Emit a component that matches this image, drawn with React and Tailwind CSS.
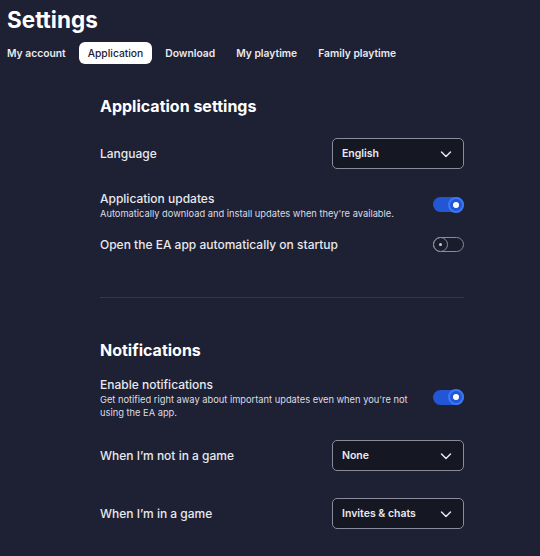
import React from "react";

function Chevron() {
  return (
    <svg width="14" height="14" viewBox="0 0 14 14" fill="none">
      <path d="M2.5 5 L7 9.5 L11.5 5" stroke="#e5e7eb" strokeWidth="1.5" strokeLinecap="round" strokeLinejoin="round" />
    </svg>
  );
}

function Select({ value }) {
  return (
    <div className="flex h-[31px] w-[132px] items-center justify-between rounded-[5px] border border-[#8a8c9c] bg-[#151723] pl-[9px] pr-[10px]">
      <span className="text-[10.5px] font-semibold text-[#e8e9ee]">{value}</span>
      <Chevron />
    </div>
  );
}

function ToggleOn() {
  return (
    <div className="mb-[2px] flex h-[15px] w-[31px] items-center justify-end rounded-full bg-[#2356d4]">
      <div className="flex h-[16px] w-[16px] items-center justify-center rounded-full border-2 border-[#3a78f5] bg-[#2356d4]">
        <div className="h-[6px] w-[6px] rounded-full bg-white" />
      </div>
    </div>
  );
}

function ToggleOff() {
  return (
    <div className="mb-[2px] flex h-[15px] w-[31px] items-center justify-start rounded-full border border-[#8a8c9c] bg-[#1a1c2b]">
      <div className="-ml-px flex h-[15px] w-[15px] items-center justify-center rounded-full border border-[#8a8c9c]">
        <div className="h-[3px] w-[3px] rounded-full bg-[#c9cad3]" />
      </div>
    </div>
  );
}

export default function App() {
  return (
    <div
      className="h-[556px] w-[540px] overflow-hidden bg-[#1e2033] text-[#e8e9ee]"
      style={{ fontFamily: "Inter, 'Noto Sans', sans-serif" }}
    >
      <div className="px-[7px] pt-[6px]">
        <h1 className="text-[22.5px] font-bold leading-[28px] text-white">Settings</h1>
        <div className="mt-[8px] flex items-center text-[10.3px] leading-[14px]">
          <div className="py-[4px] font-semibold">My account</div>
          <div className="ml-[13px] rounded-[6px] bg-white px-[9px] py-[4px] font-medium text-[#1e2033]">Application</div>
          <div className="ml-[13px] py-[4px] font-semibold">Download</div>
          <div className="ml-[21px] py-[4px] font-semibold">My playtime</div>
          <div className="ml-[21px] py-[4px] font-semibold">Family playtime</div>
        </div>
      </div>

      <div className="ml-[100px] w-[364px]">
        <h2 className="mt-[32px] text-[16px] font-bold leading-[20px] text-white">Application settings</h2>

        <div className="mt-[22px] flex items-center justify-between">
          <span className="text-[12px] font-medium">Language</span>
          <Select value="English" />
        </div>

        <div className="mt-[22px] flex items-center justify-between">
          <div>
            <div className="text-[12px] font-medium leading-[16px]">Application updates</div>
            <div className="text-[9.3px] leading-[13px] text-[#dcdde3]">
              Automatically download and install updates when they're available.
            </div>
          </div>
          <ToggleOn />
        </div>

        <div className="mt-[16px] flex items-center justify-between">
          <span className="text-[12px] font-medium">Open the EA app automatically on startup</span>
          <ToggleOff />
        </div>

        <div className="mt-[43px] h-px bg-[#34364b]" />

        <h2 className="mt-[42px] text-[16px] font-bold leading-[20px] text-white">Notifications</h2>

        <div className="mt-[17px] flex items-center justify-between">
          <div className="w-[315px]">
            <div className="text-[12px] font-medium leading-[16px]">Enable notifications</div>
            <div className="text-[9.3px] leading-[13px] text-[#dcdde3]">
              Get notified right away about important updates even when you're not using the EA app.
            </div>
          </div>
          <ToggleOn />
        </div>

        <div className="mt-[21px] flex items-center justify-between">
          <span className="text-[12px] font-medium">When I’m not in a game</span>
          <Select value="None" />
        </div>

        <div className="mt-[27px] flex items-center justify-between">
          <span className="text-[12px] font-medium">When I’m in a game</span>
          <Select value="Invites & chats" />
        </div>
      </div>
    </div>
  );
}
